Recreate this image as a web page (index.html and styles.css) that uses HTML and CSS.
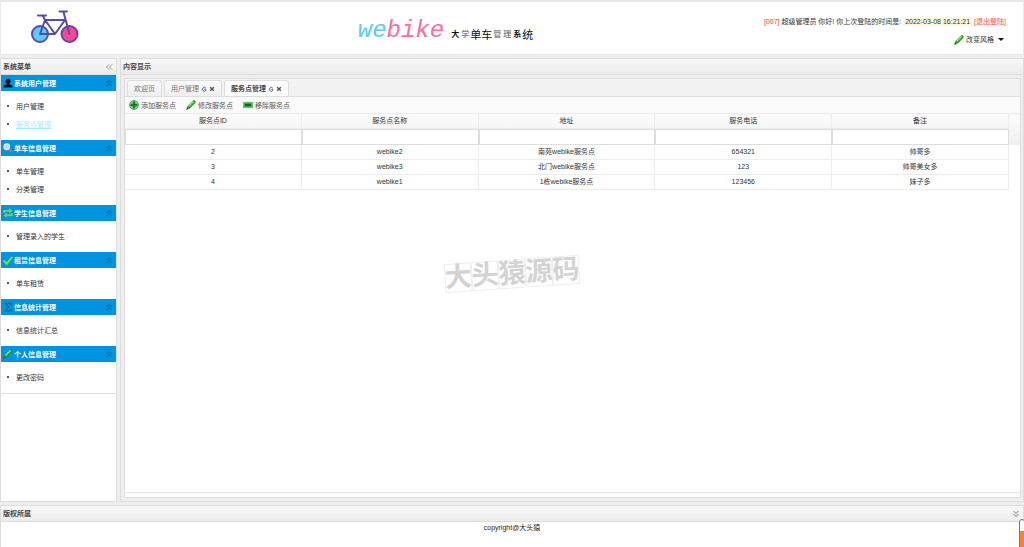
FILE: index.html
```html
<!DOCTYPE html>
<html>
<head>
<meta charset="utf-8">
<title>webike</title>
<link rel="stylesheet" href="styles.css">
</head>
<body>
<svg class="defs" aria-hidden="true">
  <symbol id="pencil" viewBox="0 0 16 16"><path d="M1 15l1.500-5L11.500 1q2-1 3 .8t0 2.700L6 13z" fill="#35a42c" stroke="#287d22"/><path d="M4 10L12 2.500" stroke="#9be58b" stroke-width="2"/><path d="M1 15l1-3 2 2z" fill="#444"/></symbol>
  <symbol id="up" viewBox="0 0 16 16"><path d="M3 8l5-5 5 5M3 14l5-5 5 5" fill="none" stroke="currentColor" stroke-width="2"/></symbol>
  <symbol id="reload" viewBox="0 0 10 10"><path d="M8 3.500A3.200 3.200 0 1 0 8 7.500V5.500H5.500" fill="none" stroke="#555" stroke-width="1.500"/></symbol>
  <symbol id="close" viewBox="0 0 10 10"><path d="M2 2l6 6M8 2L2 8" stroke="#555" stroke-width="2.400"/></symbol>
</svg>
<header class="banner">
  <svg class="bike" viewBox="0 0 48 36" role="img" aria-label="bike">
    <g stroke="#5b4aa5" stroke-width="2" fill="none" stroke-linecap="round" stroke-linejoin="round">
      <circle cx="9" cy="25" r="8" fill="#5ccbfa"/><circle cx="38.500" cy="25" r="8" fill="#ff4593"/>
      <path d="M9 25l5-14h20L24 25H9M14 11l10 14M7 6.500h8M12 7l2 4M28.500 2.500H36M32.500 3L38.500 25"/>
    </g>
  </svg>
  <h1 class="brand"><span class="logo"><span class="logo-blue">we</span><span class="logo-pink">bike</span></span><span class="system"><span class="ink">大</span><span class="ink faint">学</span>单车<span class="ink faint">管</span><span class="ink faint">理</span><span class="ink">系</span>统</span></h1>
  <div class="account">
    <div class="login"><span class="red">[007]</span> 超级管理员 你好! 你上次登陆的时间是: <span class="time">2022-03-08 16:21:21</span> <a class="red" href="#">[退出登陆]</a></div>
    <button class="theme" type="button"><svg class="icon"><use href="#pencil"/></svg>改变风格<span class="caret"></span></button>
  </div>
</header>
<main class="middle">
  <nav class="panel west">
    <h2 class="panel-title">系统菜单<svg class="tool" viewBox="0 0 16 16"><path d="M8 3L3 8l5 5M14 3L9 8l5 5" fill="none" stroke="#777" stroke-width="1.500"/></svg></h2>
    <div class="menu">
      <h3 class="group"><svg class="icon" viewBox="0 0 16 16"><circle cx="8" cy="5" r="4" fill="#111"/><path d="M6 7h4v3l5 2v3H1v-3l5-2z" fill="#111"/></svg>系统用户管理<svg class="fold"><use href="#up"/></svg></h3>
      <ul class="items"><li><a href="#">用户管理</a></li><li><a class="current" href="#">服务点管理</a></li></ul>
      <h3 class="group"><svg class="icon" viewBox="0 0 16 16"><path d="M9 9l5 5" stroke="#c97a3b" stroke-width="3.500"/><circle cx="6" cy="6" r="4.500" fill="#b9e2fa" stroke="#dce6ec" stroke-width="2"/></svg>单车信息管理<svg class="fold"><use href="#up"/></svg></h3>
      <ul class="items"><li><a href="#">单车管理</a></li><li><a href="#">分类管理</a></li></ul>
      <h3 class="group"><svg class="icon" viewBox="0 0 16 16"><path d="M2 8V4.500h9M14 8v3.500H5" fill="none" stroke="#74cf63" stroke-width="3"/><path d="M10 0l5 4.500-5 4.500zM6 7l-5 4.500L6 16z" fill="#74cf63"/></svg>学生信息管理<svg class="fold"><use href="#up"/></svg></h3>
      <ul class="items"><li><a href="#">管理录入的学生</a></li></ul>
      <h3 class="group"><svg class="icon" viewBox="0 0 16 16"><path d="M1 9l5 5L15 3" fill="none" stroke="#75d957" stroke-width="3.500"/></svg>租赁信息管理<svg class="fold"><use href="#up"/></svg></h3>
      <ul class="items"><li><a href="#">单车租赁</a></li></ul>
      <h3 class="group"><svg class="icon" viewBox="0 0 16 16"><path d="M13 5V2H4l5 6-5 6h9v-3" fill="none" stroke="#34627f" stroke-width="2"/></svg>信息统计管理<svg class="fold"><use href="#up"/></svg></h3>
      <ul class="items"><li><a href="#">信息统计汇总</a></li></ul>
      <h3 class="group"><svg class="icon"><use href="#pencil"/></svg>个人信息管理<svg class="fold"><use href="#up"/></svg></h3>
      <ul class="items"><li><a href="#">更改密码</a></li></ul>
    </div>
  </nav>
  <section class="panel center">
    <h2 class="panel-title">内容显示</h2>
    <div class="workspace">
      <div class="tabs">
        <button class="tab" type="button">欢迎页</button>
        <button class="tab" type="button">用户管理<svg class="mini"><use href="#reload"/></svg><svg class="mini"><use href="#close"/></svg></button>
        <button class="tab active" type="button">服务点管理<svg class="mini"><use href="#reload"/></svg><svg class="mini"><use href="#close"/></svg></button>
      </div>
      <div class="sheet">
        <div class="toolbar">
          <button type="button"><svg class="icon" viewBox="0 0 16 16"><circle cx="8" cy="8" r="7" fill="#a8dcae" stroke="#3f9a4c" stroke-width="1.500"/><path d="M8 2.500v11M2.500 8h11" stroke="#12801f" stroke-width="4"/></svg>添加服务点</button>
          <button type="button"><svg class="icon"><use href="#pencil"/></svg>修改服务点</button>
          <button type="button"><svg class="icon" viewBox="0 0 16 16"><rect y="3" width="16" height="10" fill="#78c683"/><rect x="1" y="4" width="14" height="8" fill="#4fb560"/><path d="M3 8h10" stroke="#0b6a1a" stroke-width="4"/></svg>移除服务点</button>
        </div>
        <div class="grid">
          <table>
            <thead>
              <tr><th>服务点ID</th><th>服务点名称</th><th>地址</th><th>服务电话</th><th>备注</th></tr>
              <tr class="filters"><td><input type="text" aria-label="服务点ID"></td><td><input type="text" aria-label="服务点名称"></td><td><input type="text" aria-label="地址"></td><td><input type="text" aria-label="服务电话"></td><td><input type="text" aria-label="备注"></td></tr>
            </thead>
            <tbody>
              <tr><td>2</td><td>webike2</td><td>南苑webike服务点</td><td>654321</td><td>帅哥多</td></tr>
              <tr><td>3</td><td>webike3</td><td>北门webike服务点</td><td>123</td><td>帅哥美女多</td></tr>
              <tr><td>4</td><td>webike1</td><td>1栋webike服务点</td><td>123456</td><td>妹子多</td></tr>
            </tbody>
          </table>
        </div>
      </div>
    </div>
  </section>
</main>
<footer class="panel south">
  <h2 class="panel-title">版权所属<svg class="tool" viewBox="0 0 16 16"><path d="M3 2l5 5 5-5M3 8l5 5 5-5" fill="none" stroke="#777" stroke-width="2"/></svg></h2>
  <p class="copyright">copyright@大头猿</p>
  <div class="gauge"></div>
</footer>
<div class="watermark"><span>大</span><span>头</span><span>猿</span><span>源</span><span>码</span></div>
</body>
</html>
```
FILE: styles.css
```css
* { box-sizing: border-box; }
body {
  margin: 0;
  min-height: 100vh;
  display: flex;
  flex-direction: column;
  gap: 3px;
  position: relative;
  overflow: hidden;
  background: #eee;
  color: #333;
  font: 7px/15px "Liberation Sans", "Noto Sans CJK SC", sans-serif;
}
h1, h2, h3, p, ul { margin: 0; padding: 0; font-size: inherit; }
button, input { font: inherit; color: inherit; margin: 0; padding: 0; border: 0; background: none; }
a { color: inherit; text-decoration: none; }
.defs { position: absolute; width: 0; height: 0; }
.icon { width: 10px; height: 10px; flex: none; }

.banner {
  display: grid;
  grid-template-columns: 33% auto 1fr;
  height: 55px;
  padding: 0 17px 0 30px;
  background: #fff;
  border: 1px solid #e8e8e8;
  border-top: 2px solid #e8e8e8;
}
.bike { width: 48px; height: 36px; margin-top: 7px; }
.brand { display: flex; align-items: baseline; gap: 6px; padding: 13px 0 0 5px; font-weight: 400; line-height: 32px; }
.logo { font-family: "Liberation Mono", monospace; font-size: 24px; font-style: italic; display: flex; }
.logo-blue { color: #5bcbf8; }
.logo-pink { color: #fb6c9f; }
.system { display: flex; font-size: 11px; color: #111; }
.ink { width: 10px; font-size: 8px; text-align: center; font-weight: 700; }
.faint { color: #888; }
.account { display: flex; flex-direction: column; align-items: flex-end; gap: 3px; padding-top: 12px; white-space: nowrap; }
.red { color: #ff4a3c; }
.time { background: #fcf8de; padding: 1px 2px; }
.theme { display: flex; align-items: center; gap: 2px; margin-right: 2px; color: #333; }
.caret { border: 3px solid transparent; border-top-color: #111; border-bottom: 0; margin-left: 2px; }

.middle { flex: 1; display: flex; gap: 3px; }
.panel { display: flex; flex-direction: column; border: 1px solid #ddd; background: #fff; }
.panel-title {
  display: flex;
  align-items: center;
  justify-content: space-between;
  height: 16px;
  padding: 0 3px 0 2px;
  flex: none;
  border-bottom: 1px solid #ddd;
  background: linear-gradient(#f8f8f8, #ececec);
  color: #444;
}
.tool { width: 8px; height: 8px; }
.west { width: 117px; flex: none; }
.menu { border-bottom: 1px solid #e0e0e0; }
.group { display: flex; align-items: center; gap: 1px; height: 16px; padding: 0 3px 0 2px; background: #0093e0; color: #fff; }
.fold { width: 8px; height: 8px; margin-left: auto; color: #17628c; }
.items { padding: 6px 0 7px 6px; list-style: none; }
.items li { display: flex; align-items: center; gap: 7px; height: 18px; }
.items li::before { content: ""; width: 2px; height: 2px; border-radius: 1px; background: #222; }
.items .current { color: #a8eaff; text-decoration: underline; }

.center { flex: 1; min-width: 0; }
.workspace { flex: 1; display: flex; flex-direction: column; padding: 3px 2px 3px 3px; background: #eee; }
.tabs { display: flex; gap: 2px; padding: 1px 2px 0; background: #f2f2f2; border: 1px solid #ddd; border-bottom: 0; }
.tab {
  display: flex;
  align-items: center;
  gap: 2px;
  height: 16px;
  padding: 0 6px;
  border: 1px solid #ddd;
  border-bottom: 0;
  border-radius: 3px 3px 0 0;
  background: linear-gradient(#fafafa, #eee);
  color: #777;
}
.tab.active { background: #fff; color: #444; font-weight: 700; }
.mini { width: 6px; height: 6px; }
.sheet { flex: 1; display: flex; flex-direction: column; padding-bottom: 4px; background: #fff; border: 1px solid #ddd; }
.toolbar { display: flex; gap: 10px; height: 17px; padding: 0 4px; background: #fafafa; border-bottom: 1px solid #eaeaea; }
.toolbar button { display: flex; align-items: center; gap: 2px; color: #555; }
.grid {
  flex: 1;
  padding-right: 11px;
  border-bottom: 1px solid #e6e6e6;
  background: linear-gradient(#fbfbfb, #f0f0f0) no-repeat 0 0 / 100% 31px;
}
table { width: 100%; table-layout: fixed; border-collapse: separate; border-spacing: 0; text-align: center; }
th, td { height: 15px; padding: 0; border-right: 1px solid #ececec; border-bottom: 1px solid #ececec; font-weight: 400; line-height: 14px; }
.filters td { height: 16px; border: 0; }
.filters input { display: block; width: 100%; height: 16px; padding: 0 2px; background: #fff; border: 1px solid #ddd; }

.south { height: 42px; position: relative; border-bottom: 0; }
.copyright { text-align: center; line-height: 11px; color: #222; }
.gauge {
  position: absolute;
  right: -2px;
  top: 13px;
  width: 6px;
  height: 34px;
  border: 1px solid #777;
  border-radius: 3px;
  background: linear-gradient(#fff 11px, #ff7f35 11px);
}
.watermark {
  position: absolute;
  left: 50%;
  top: 50%;
  display: flex;
  transform: translate(-50%, -50%) rotate(-4deg);
  color: #d3d3d3;
  font-size: 27px;
  font-weight: 700;
  line-height: 27px;
  pointer-events: none;
}
.watermark span { border: 1px solid #eee; width: 27px; display: flex; justify-content: center; }
```
